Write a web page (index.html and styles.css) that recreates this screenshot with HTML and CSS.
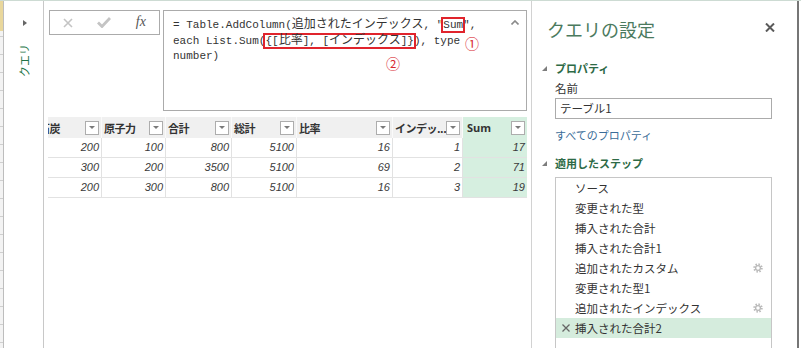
FILE: index.html
```html
<!DOCTYPE html>
<html lang="ja">

<head>
  <meta charset="UTF-8">
  <meta name="viewport" content="width=device-width, initial-scale=1.0">
  <title>クエリ エディター</title>
  <link rel="stylesheet" href="styles.css">
</head>

<body>
  <div class="edge"></div>

  <div class="nav">
    <span class="nav-arrow"></span>
    <span class="nav-label">クエリ</span>
  </div>

  <div class="main">
    <div class="formula-row">
      <div class="formula-buttons">
        <span class="fb-btn">
          <svg width="10" height="10" viewBox="0 0 10 10"><path d="M1 1L9 9M9 1L1 9" stroke="#c4c4c4" stroke-width="1.6" fill="none"/></svg>
        </span>
        <span class="fb-btn">
          <svg width="14" height="11" viewBox="0 0 14 11"><path d="M1 5.5L5 9.5L13 1" stroke="#c4c4c4" stroke-width="2.8" fill="none"/></svg>
        </span>
        <span class="fb-btn fx">fx</span>
      </div>

      <div class="formula-box">
        <div class="formula-text">= Table.AddColumn(<span class="jp">追加されたインデックス</span>, "<span class="mark">Sum</span>",<br>each List.Sum(<span class="mark">{[<span class="jp">比率</span>], [<span class="jp">インデックス</span>]}</span>), type<br>number)</div>
        <svg class="caret" width="8" height="5" viewBox="0 0 8 5"><path d="M0.5 4.5L4 1L7.5 4.5" stroke="#8a8a8a" stroke-width="1.6" fill="none"/></svg>
        <span class="note note-1">①</span>
        <span class="note note-2">②</span>
      </div>
    </div>

    <div class="grid">
      <div class="hd first"><span class="hd-name">石炭</span><span class="dd"></span></div>
      <div class="hd"><span class="hd-name">原子力</span><span class="dd"></span></div>
      <div class="hd"><span class="hd-name">合計</span><span class="dd"></span></div>
      <div class="hd"><span class="hd-name">総計</span><span class="dd"></span></div>
      <div class="hd"><span class="hd-name">比率</span><span class="dd"></span></div>
      <div class="hd"><span class="hd-name">インデッ...</span><span class="dd"></span></div>
      <div class="hd sum"><span class="hd-name latin">Sum</span><span class="dd"></span></div>

      <div class="c">200</div>
      <div class="c">100</div>
      <div class="c">800</div>
      <div class="c">5100</div>
      <div class="c">16</div>
      <div class="c">1</div>
      <div class="c sum">17</div>

      <div class="c">300</div>
      <div class="c">200</div>
      <div class="c">3500</div>
      <div class="c">5100</div>
      <div class="c">69</div>
      <div class="c">2</div>
      <div class="c sum">71</div>

      <div class="c">200</div>
      <div class="c">300</div>
      <div class="c">800</div>
      <div class="c">5100</div>
      <div class="c">16</div>
      <div class="c">3</div>
      <div class="c sum">19</div>
    </div>
  </div>

  <div class="settings">
    <div class="settings-head">
      <span class="settings-title">クエリの設定</span>
      <svg class="close" width="10" height="9" viewBox="0 0 10 9"><path d="M1 0.5L9 8.5M9 0.5L1 8.5" stroke="#5a5a5a" stroke-width="2" fill="none"/></svg>
    </div>

    <div class="sec-title"><span class="tri"></span>プロパティ</div>
    <div class="field-label">名前</div>
    <div class="name-input">テーブル1</div>
    <div class="link">すべてのプロパティ</div>

    <div class="sec-title steps-title"><span class="tri"></span>適用したステップ</div>
    <div class="steps">
      <div class="step"><span class="step-icon"></span>ソース</div>
      <div class="step"><span class="step-icon"></span>変更された型</div>
      <div class="step"><span class="step-icon"></span>挿入された合計</div>
      <div class="step"><span class="step-icon"></span>挿入された合計1</div>
      <div class="step"><span class="step-icon"></span>追加されたカスタム
        <svg class="gear" width="10" height="10" viewBox="0 0 10 10"><circle cx="5" cy="5" r="3.7" fill="none" stroke="#b9b9b9" stroke-width="2" stroke-dasharray="1.45 1.45"/><circle cx="5" cy="5" r="2.4" fill="none" stroke="#b9b9b9" stroke-width="1.3"/></svg>
      </div>
      <div class="step"><span class="step-icon"></span>変更された型1</div>
      <div class="step"><span class="step-icon"></span>追加されたインデックス
        <svg class="gear" width="10" height="10" viewBox="0 0 10 10"><circle cx="5" cy="5" r="3.7" fill="none" stroke="#b9b9b9" stroke-width="2" stroke-dasharray="1.45 1.45"/><circle cx="5" cy="5" r="2.4" fill="none" stroke="#b9b9b9" stroke-width="1.3"/></svg>
      </div>
      <div class="step selected">
        <span class="step-icon"><svg width="8" height="8" viewBox="0 0 8 8"><path d="M0.5 0.5L7.5 7.5M7.5 0.5L0.5 7.5" stroke="#666" stroke-width="1.3" fill="none"/></svg></span>挿入された合計2
      </div>
    </div>
  </div>
</body>

</html>
```

FILE: styles.css
```css
* {
  box-sizing: border-box;
}

body {
  margin: 0;
  height: 348px;
  display: flex;
  overflow: hidden;
  background-color: #fff;
  border-top: 1px solid #cddbd3;
  font-family: "Noto Sans CJK JP", "Noto Sans", sans-serif;
  color: #333;
}

/* sliver of the sheet behind the editor */
.edge {
  width: 4px;
  border-right: 1px solid #bdbdbd;
  background:
    linear-gradient(#e9d79c, #e9d79c) top / 100% 30px no-repeat,
    repeating-linear-gradient(#f3f3f3 0 17px, #cfcfcf 17px 18px);
}

.nav {
  width: 40px;
  border-right: 1px solid #c8c8c8;
  display: flex;
  flex-direction: column;
  align-items: center;
  padding-top: 19px;
}

.nav-arrow {
  width: 0;
  height: 0;
  margin-left: 3px;
  border-left: 4px solid #666;
  border-top: 3.5px solid transparent;
  border-bottom: 3.5px solid transparent;
}

.nav-label {
  margin-top: 18px;
  writing-mode: vertical-rl;
  text-orientation: sideways;
  transform: rotate(180deg);
  font-size: 11px;
  line-height: 12px;
  color: #217346;
}

.main {
  width: 488px;
  border-right: 1px solid #d2d2d2;
  padding: 9px 4px 0 4px;
}

.formula-row {
  display: flex;
  height: 101px;
  margin-bottom: 6px;
}

.formula-buttons {
  display: flex;
  width: 111px;
  height: 25px;
  margin-left: 1px;
  border: 1px solid #ababab;
}

.fb-btn {
  flex: 1;
  display: flex;
  justify-content: center;
  align-items: center;
}

.fx {
  font-family: "Liberation Serif", serif;
  font-style: italic;
  font-size: 14px;
  color: #555;
  padding-bottom: 2px;
}

.formula-box {
  flex: 1;
  margin-left: 3px;
  border: 1px solid #ababab;
  position: relative;
  padding: 7px 0 0 9px;
}

.formula-text {
  font-family: "Liberation Mono", "Noto Sans CJK JP", monospace;
  font-size: 11px;
  line-height: 15.5px;
  color: #333;
}

.formula-text .jp {
  font-size: 12px;
}

.mark {
  box-shadow: 0 0 0 2px #e0242c;
}

.caret {
  position: absolute;
  right: 7px;
  top: 9px;
}

.note {
  position: absolute;
  font-size: 14px;
  line-height: 14px;
  color: #d8282f;
}

.note-1 {
  left: 301px;
  top: 25px;
}

.note-2 {
  left: 222px;
  top: 45px;
}

.grid {
  display: grid;
  grid-template-columns: 54px 64px 66px 65px 96px 70px 64px;
  grid-template-rows: 21px;
  grid-auto-rows: 20px;
}

.hd {
  display: flex;
  align-items: center;
  background-color: #f0f0f0;
  border-right: 1px solid #fafafa;
  padding: 0 2px 0 2px;
  overflow: hidden;
}

.hd.first {
  padding-left: 0;
}

.hd.first .hd-name {
  margin-left: -9px;
}

.hd-name {
  flex: 1;
  min-width: 0;
  font-size: 11px;
  font-weight: bold;
  color: #333;
  white-space: nowrap;
  letter-spacing: -0.5px;
}

.hd-name.latin {
  font-family: "Open Sans", "Liberation Sans", sans-serif;
  letter-spacing: 0;
  padding-left: 2px;
}

.dd {
  flex: none;
  width: 14px;
  height: 14px;
  border: 1px solid #adadad;
  background-color: #fff;
  display: flex;
  justify-content: center;
  align-items: center;
}

.dd::after {
  content: "";
  border-top: 3px solid #7a7a7a;
  border-left: 3px solid transparent;
  border-right: 3px solid transparent;
}

.c {
  border-right: 1px solid #e2e2e2;
  border-bottom: 1px solid #e2e2e2;
  text-align: right;
  padding-right: 2px;
  font-family: "Liberation Sans", Arial, sans-serif;
  font-style: italic;
  font-size: 11px;
  line-height: 19px;
  color: #3a3a3a;
}

.sum {
  background-color: #d6efe0;
  border-right: none;
}

.settings {
  width: 267px;
  border-right: 2px solid #767676;
  padding: 16px 0 0 10px;
  display: flex;
  flex-direction: column;
}

.settings-head {
  display: flex;
  justify-content: space-between;
  padding-right: 22px;
}

.settings-title {
  margin-left: 5px;
  font-size: 18px;
  line-height: 24px;
  color: #4b7a5e;
}

.close {
  margin-top: 6px;
}

.sec-title {
  display: flex;
  align-items: center;
  margin-top: 19px;
  font-size: 11px;
  line-height: 16px;
  font-weight: bold;
  color: #2d6a46;
}

.steps-title {
  margin-top: 12px;
}

.tri {
  width: 0;
  height: 0;
  margin-right: 8px;
  border-left: 5px solid transparent;
  border-bottom: 5px solid #7d7d7d;
}

.field-label {
  margin: 4px 0 0 13px;
  font-size: 11.5px;
  line-height: 16px;
}

.name-input {
  width: 217px;
  height: 21px;
  margin: 2px 0 0 13px;
  border: 1px solid #ababab;
  padding-left: 4px;
  font-size: 11.5px;
  line-height: 19px;
}

.link {
  margin: 8px 0 0 13px;
  font-size: 11px;
  line-height: 16px;
  color: #3a6c98;
}

.steps {
  flex: 1;
  width: 217px;
  margin: 6px 0 0 13px;
  border: 1px solid #c6c6c6;
  border-bottom: none;
}

.step {
  display: flex;
  align-items: center;
  height: 20px;
  padding-left: 6px;
  font-size: 11.5px;
  color: #333;
}

.step-icon {
  width: 13px;
  display: flex;
  align-items: center;
}

.step.selected {
  background-color: #d5ecdd;
}

.gear {
  margin-left: auto;
  margin-right: 8px;
}
```
